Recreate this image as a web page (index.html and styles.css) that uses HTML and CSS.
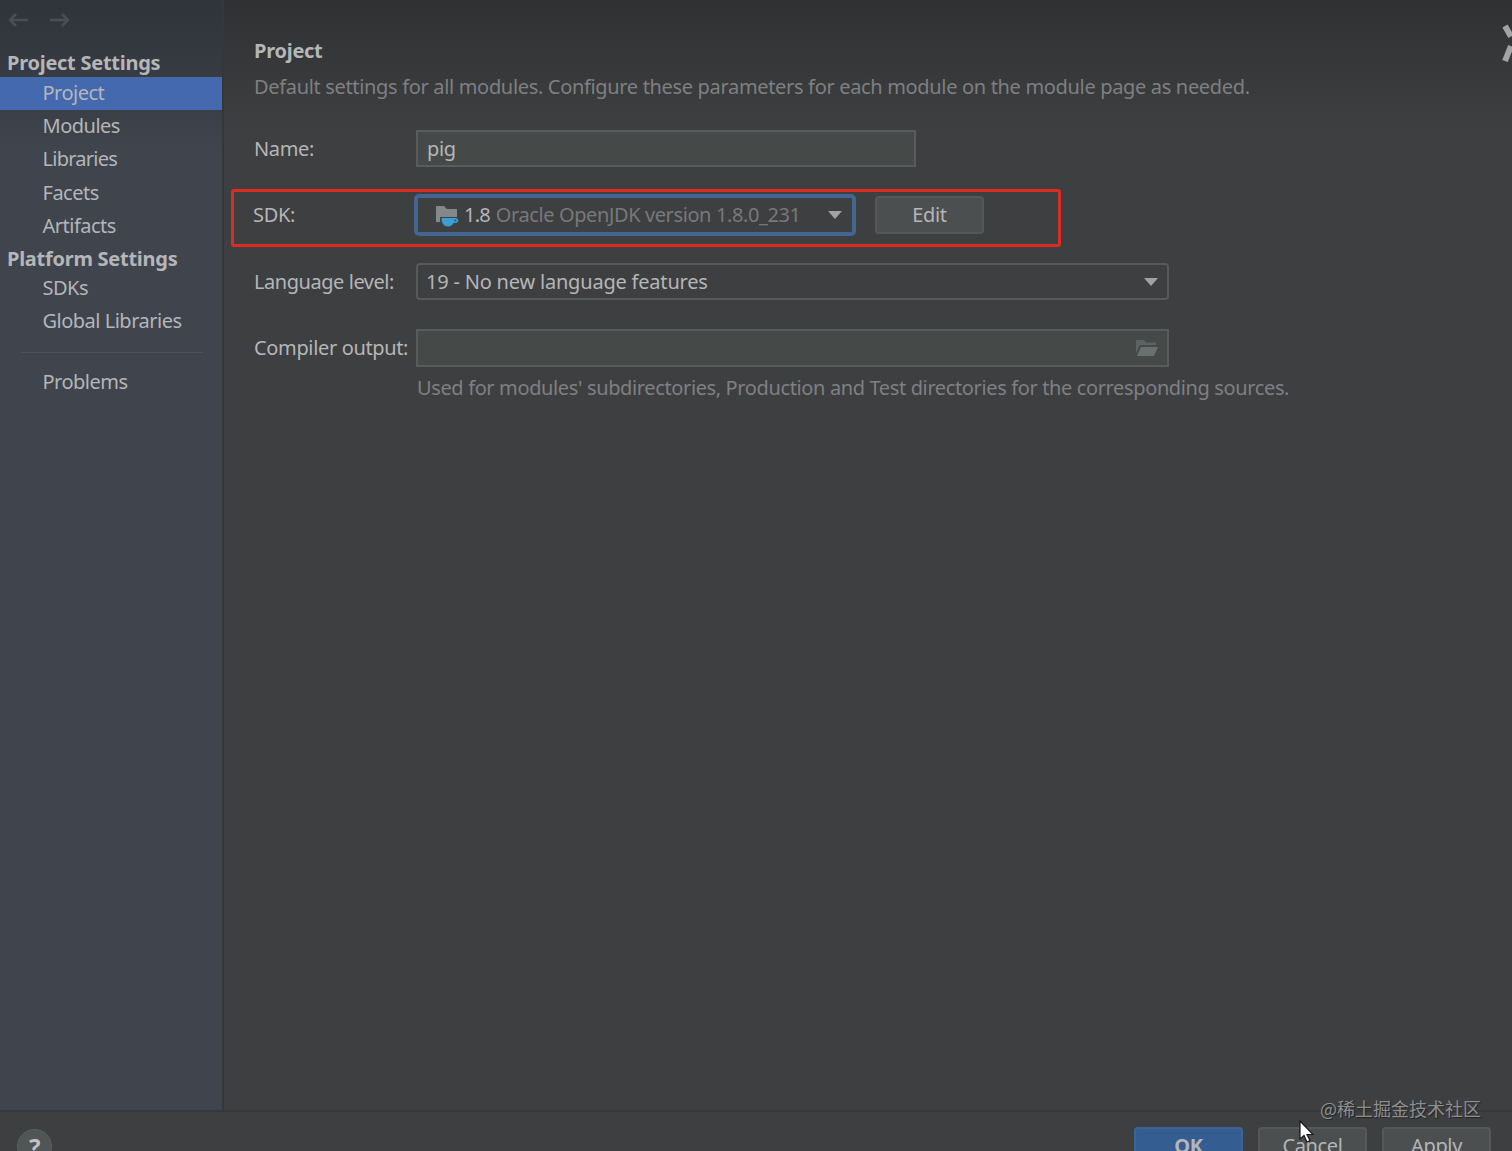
FILE: index.html
```html
<!DOCTYPE html>
<html lang="en">
<head>
  <meta charset="UTF-8">
  <meta name="viewport" content="width=device-width, initial-scale=1.0">
  <title>Project Structure</title>
  <link rel="stylesheet" href="styles.css">
</head>
<body>
  <div class="window">
    <div class="main">
      <nav class="sidebar">
        <div class="history">
          <svg width="22" height="16" viewBox="0 0 22 16"><path d="M20 8H2M8 2L2 8l6 6"/></svg>
          <svg width="22" height="16" viewBox="0 0 22 16"><path d="M0 8h18M12 2l6 6-6 6"/></svg>
        </div>
        <h2>Project Settings</h2>
        <a class="item selected">Project</a>
        <a class="item">Modules</a>
        <a class="item libraries">Libraries</a>
        <a class="item">Facets</a>
        <a class="item">Artifacts</a>
        <h2 class="platform">Platform Settings</h2>
        <a class="item">SDKs</a>
        <a class="item">Global Libraries</a>
        <hr>
        <a class="item">Problems</a>
      </nav>

      <section class="content">
        <h1>Project</h1>
        <p class="intro">Default settings for all modules. Configure these parameters for each module on the module page as needed.</p>

        <div class="row name-row">
          <label>Name:</label>
          <div class="field name">pig</div>
        </div>

        <div class="row sdk-row">
          <label>SDK:</label>
          <div class="combo sdk">
            <svg class="sdk-icon" width="24" height="23" viewBox="0 0 24 23">
              <path fill="#858889" d="M1 2h8l3 3h10v9H6v4H1z"/>
              <path fill="#3f4142" d="M5 13h18v9H8l-3-4z"/>
              <path fill="#3a9fd3" d="M6.500 14H20c4.500 0 4.500 5 0 5h-1.500c-1 2-3 3.500-5.500 3.500-4 0-6.500-3-6.500-8.500z"/>
              <path fill="#3f4142" d="M19.500 15.700h1.800v1.500h-1.800z"/>
            </svg>
            <span class="version">1.8</span>
            <span class="detail">Oracle OpenJDK version 1.8.0_231</span>
            <i class="arrow"></i>
          </div>
          <button class="btn edit">Edit</button>
        </div>

        <div class="row level-row">
          <label class="level-label">Language level:</label>
          <div class="combo level">
            <span class="level-text">19 - No new language features</span>
            <i class="arrow"></i>
          </div>
        </div>

        <div class="row output-row">
          <label>Compiler output:</label>
          <div class="field output">
            <svg width="22" height="17" viewBox="0 0 22 17">
              <path fill="#5d6363" d="M0 0h8l2 2.500h10V5H4L0 13z"/>
              <path fill="#697070" d="M5 7h17l-4 9H1z"/>
            </svg>
          </div>
        </div>
        <p class="hint">Used for modules' subdirectories, Production and Test directories for the corresponding sources.</p>
      </section>
    </div>

    <footer class="footer">
      <span class="help">?</span>
      <div class="actions">
        <button class="btn primary">OK</button>
        <button class="btn">Cancel</button>
        <button class="btn">Apply</button>
      </div>
    </footer>

    <svg class="close" width="12" height="40" viewBox="0 0 12 40">
      <path d="M4 2L10 12.500M4 37L10 22" stroke="#a2a3a4" stroke-width="6"/>
    </svg>
    <span class="watermark">@稀土掘金技术社区</span>
    <svg class="cursor" width="16" height="24" viewBox="0 0 16 24">
      <path d="M1 1v18l4-3.500 3 6.500 3-1.500-3-6h6z" fill="#fff" stroke="#17181a" stroke-width="1.200"/>
    </svg>
  </div>
</body>
</html>
```
FILE: styles.css
```css
* {
  box-sizing: border-box;
}
body {
  margin: 0;
  overflow: hidden;
  background: #3e3f41;
  color: #b4b6b8;
  font-family: "Noto Sans", "Noto Sans CJK SC", sans-serif;
  font-size: 20px;
  line-height: 28px;
  letter-spacing: -0.35px;
}
h1, h2, p {
  margin: 0;
}
h1, h2 {
  font-size: 20px;
  font-weight: 700;
  line-height: 28px;
  letter-spacing: -0.26px;
}
.window {
  position: relative;
  height: 1151px;
  display: flex;
  flex-direction: column;
  overflow: hidden;
  background: linear-gradient(#303133, #3e3f41 130px);
}
.main {
  display: flex;
  flex: none;
  height: 1110px;
}

/* Sidebar */
.sidebar {
  width: 224px;
  flex: none;
  border-right: 2px solid #35383b;
  background: linear-gradient(#2f343a, #3f444d 150px);
}
.history {
  display: flex;
  gap: 20px;
  height: 49px;
  padding: 12px 0 0 8px;
}
.history path {
  fill: none;
  stroke: #4a4f54;
  stroke-width: 2.5;
}
.sidebar h2 {
  height: 28px;
  padding-left: 7px;
}
.sidebar .platform {
  height: 29px;
  line-height: 31px;
}
.item {
  display: block;
  height: 33.2px;
  padding-left: 42.5px;
  line-height: 32px;
  letter-spacing: -0.5px;
}
.libraries {
  letter-spacing: -0.75px;
}
.selected {
  background: #4569af;
}
.sidebar hr {
  height: 1px;
  margin: 14px 19px 13px 21px;
  border: 0;
  background: #4d525a;
}

/* Settings form */
.content {
  flex: 1;
  padding: 37px 0 0 30px;
}
.intro, .hint {
  color: #7e8081;
  white-space: nowrap;
}
.intro {
  margin-top: 8px;
  letter-spacing: -0.33px;
}
.row {
  display: flex;
  align-items: center;
  height: 37px;
}
.row label {
  width: 162px;
  flex: none;
  white-space: nowrap;
}
.name-row {
  margin-top: 29px;
}
.field {
  height: 37px;
  border: 2px solid #575c5d;
  background: #454948;
}
.name {
  width: 500px;
  padding-left: 9px;
  line-height: 34px;
}
.sdk-row {
  width: 830px;
  height: 58px;
  margin: 22px 0 0 -23px;
  padding: 0 0 6px 19px;
  border: 3px solid #d92d25;
  border-radius: 3px;
}
.sdk-row label {
  width: 161px;
}
.combo {
  display: flex;
  align-items: center;
  border: 2px solid #58595b;
  border-radius: 4px;
}
.sdk {
  width: 442px;
  height: 42px;
  padding: 0 10px 0 17px;
  border: 4px solid #436690;
  border-radius: 5px;
}
.sdk-icon {
  margin-right: 5px;
}
.version {
  letter-spacing: -0.8px;
}
.detail {
  margin-left: 6px;
  color: #77797b;
  letter-spacing: -0.4px;
}
.arrow {
  margin-left: auto;
  border: 7px solid transparent;
  border-top: 8px solid #a0a2a3;
  border-bottom: 0;
}
.btn {
  width: 109px;
  height: 38px;
  padding: 0;
  border: 2px solid #555859;
  border-radius: 4px;
  background: #4b4f50;
  color: #b4b6b8;
  font: inherit;
  letter-spacing: inherit;
}
.edit {
  margin-left: 19px;
}
.level-row {
  margin-top: 16px;
}
.level-label {
  letter-spacing: -0.45px;
}
.level {
  width: 753px;
  height: 37px;
  padding: 0 9px 0 8px;
}
.level-text {
  letter-spacing: -0.2px;
}
.output-row {
  margin-top: 29px;
}
.output {
  display: flex;
  align-items: center;
  justify-content: flex-end;
  width: 753px;
  height: 38px;
  padding: 2px 9px 0 0;
}
.hint {
  margin: 8px 0 0 163px;
  letter-spacing: -0.37px;
}

/* Bottom bar */
.footer {
  display: flex;
  justify-content: space-between;
  height: 56px;
  flex: none;
  padding: 15px 21px 0 17px;
  border-top: 2px solid #363839;
}
.help {
  width: 35px;
  height: 35px;
  margin-top: 2px;
  border: 1px solid #5b5f5e;
  border-radius: 50%;
  background: #505655;
  color: #c0c2c3;
  font-size: 24px;
  font-weight: 700;
  line-height: 33px;
  text-align: center;
}
.actions {
  display: flex;
  gap: 15px;
}
.primary {
  border-color: #3c6596;
  background: #345d91;
  font-weight: 700;
}

/* Overlays */
.close {
  position: absolute;
  top: 24px;
  right: -1px;
}
.watermark {
  position: absolute;
  top: 1094px;
  left: 1320px;
  color: #8d8e90;
  font-family: "Noto Sans CJK SC", sans-serif;
  font-size: 18px;
  letter-spacing: 0;
  text-shadow: 1px 1px 1px #222;
  white-space: nowrap;
}
.cursor {
  position: absolute;
  top: 1120px;
  left: 1299px;
}
```
